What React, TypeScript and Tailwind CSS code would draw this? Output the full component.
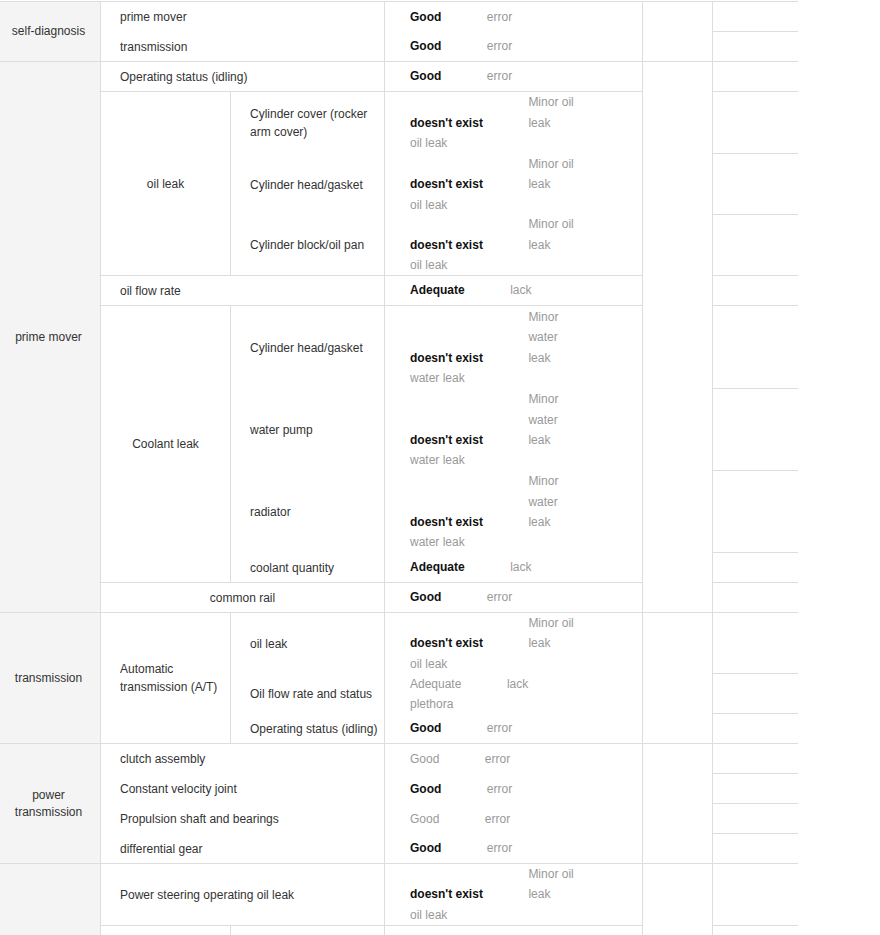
import React from 'react';

// column 1: group heading (gray)
const GROUP =
    'flex items-center justify-center border-r border-b border-[#ddd] bg-[#f4f4f4] pr-[3px] text-center leading-[17px] text-[#333]';
// item label cells (col 2 / col 3)
const LABEL = 'flex items-center border-r border-[#ddd] pl-[19px] leading-[18px] text-[#333]';
// centered label spanning sub rows
const CENTER = 'flex items-center justify-center border-r border-[#ddd] text-center leading-[18px] text-[#333]';
// result cell
const VALUE = 'flex flex-col justify-center border-r border-[#ddd] pl-[25px] leading-[20.4px]';
const NOTE = 'border-r border-b border-[#ddd]';

const EXTRA_ROWS = [
    'row-start-1', 'row-start-2', 'row-start-3', 'row-start-4', 'row-start-5', 'row-start-6', 'row-start-7',
    'row-start-8', 'row-start-9', 'row-start-10', 'row-start-11', 'row-start-12', 'row-start-13', 'row-start-14',
    'row-start-15', 'row-start-16', 'row-start-17', 'row-start-18', 'row-start-19', 'row-start-20', 'row-start-21',
];

const Choice = ({ on = false, last = false, children }: { on?: boolean; last?: boolean; children: React.ReactNode }) => (
    <span className={`${on ? 'font-bold text-[#111]' : 'text-[#999]'} ${last ? '' : 'mr-[45.5px]'}`}>{children}</span>
);

const GoodError = ({ on = true }: { on?: boolean }) => (
    <div>
        <Choice on={on}>Good</Choice>
        <Choice last>error</Choice>
    </div>
);

const AdequateLack = () => (
    <div>
        <Choice on>Adequate</Choice>
        <Choice last>lack</Choice>
    </div>
);

const Leak = ({ kind }: { kind: string }) => (
    <>
        <div className="flex items-end">
            <Choice on>doesn't exist</Choice>
            <span className="w-[50px] text-[#999]">Minor {kind} leak</span>
        </div>
        <div className="text-[#999]">{kind} leak</div>
    </>
);

export default function App() {
    return (
        <div className="min-h-screen bg-white font-['Liberation_Sans',Arial,sans-serif] text-[12px]">
            <div className="mt-px grid w-[798px] grid-cols-[101px_130px_154px_258px_70px_85px] grid-rows-[30px_30px_30px_62px_61px_61px_30px_83px_82px_82px_30px_30px_61px_40px_30px_30px_30px_30px_30px_62px_40px] border-t border-[#ddd]">
                {/* self-diagnosis */}
                <div className={`${GROUP} col-start-1 row-start-1 row-span-2`}>self-diagnosis</div>
                <div className={`${LABEL} col-start-2 col-span-2 row-start-1`}>prime mover</div>
                <div className={`${VALUE} col-start-4 row-start-1`}><GoodError /></div>
                <div className={`${LABEL} border-b col-start-2 col-span-2 row-start-2`}>transmission</div>
                <div className={`${VALUE} border-b col-start-4 row-start-2`}><GoodError /></div>
                <div className={`${NOTE} col-start-5 row-start-1 row-span-2`} />

                {/* prime mover */}
                <div className={`${GROUP} col-start-1 row-start-3 row-span-10`}>prime mover</div>
                <div className={`${LABEL} border-b col-start-2 col-span-2 row-start-3`}>Operating status (idling)</div>
                <div className={`${VALUE} border-b col-start-4 row-start-3`}><GoodError /></div>

                <div className={`${CENTER} border-b col-start-2 row-start-4 row-span-3`}>oil leak</div>
                <div className={`${LABEL} col-start-3 row-start-4`}>Cylinder cover (rocker arm cover)</div>
                <div className={`${VALUE} col-start-4 row-start-4`}><Leak kind="oil" /></div>
                <div className={`${LABEL} col-start-3 row-start-5`}>Cylinder head/gasket</div>
                <div className={`${VALUE} col-start-4 row-start-5`}><Leak kind="oil" /></div>
                <div className={`${LABEL} border-b col-start-3 row-start-6`}>Cylinder block/oil pan</div>
                <div className={`${VALUE} border-b col-start-4 row-start-6`}><Leak kind="oil" /></div>

                <div className={`${LABEL} border-b col-start-2 col-span-2 row-start-7`}>oil flow rate</div>
                <div className={`${VALUE} border-b col-start-4 row-start-7`}><AdequateLack /></div>

                <div className={`${CENTER} border-b col-start-2 row-start-8 row-span-4`}>Coolant leak</div>
                <div className={`${LABEL} col-start-3 row-start-8`}>Cylinder head/gasket</div>
                <div className={`${VALUE} col-start-4 row-start-8`}><Leak kind="water" /></div>
                <div className={`${LABEL} col-start-3 row-start-9`}>water pump</div>
                <div className={`${VALUE} col-start-4 row-start-9`}><Leak kind="water" /></div>
                <div className={`${LABEL} col-start-3 row-start-10`}>radiator</div>
                <div className={`${VALUE} col-start-4 row-start-10`}><Leak kind="water" /></div>
                <div className={`${LABEL} border-b col-start-3 row-start-11`}>coolant quantity</div>
                <div className={`${VALUE} border-b col-start-4 row-start-11`}><AdequateLack /></div>

                <div className={`${CENTER} border-b col-start-2 col-span-2 row-start-12`}>common rail</div>
                <div className={`${VALUE} border-b col-start-4 row-start-12`}><GoodError /></div>
                <div className={`${NOTE} col-start-5 row-start-3 row-span-10`} />

                {/* transmission */}
                <div className={`${GROUP} col-start-1 row-start-13 row-span-3`}>transmission</div>
                <div className={`${LABEL} border-b col-start-2 row-start-13 row-span-3`}>Automatic transmission (A/T)</div>
                <div className={`${LABEL} col-start-3 row-start-13`}>oil leak</div>
                <div className={`${VALUE} col-start-4 row-start-13`}><Leak kind="oil" /></div>
                <div className={`${LABEL} col-start-3 row-start-14`}>Oil flow rate and status</div>
                <div className={`${VALUE} col-start-4 row-start-14`}>
                    <div>
                        <Choice>Adequate</Choice>
                        <Choice last>lack</Choice>
                    </div>
                    <div className="text-[#999]">plethora</div>
                </div>
                <div className={`${LABEL} border-b col-start-3 row-start-15`}>Operating status (idling)</div>
                <div className={`${VALUE} border-b col-start-4 row-start-15`}><GoodError /></div>
                <div className={`${NOTE} col-start-5 row-start-13 row-span-3`} />

                {/* power transmission */}
                <div className={`${GROUP} col-start-1 row-start-16 row-span-4`}>power transmission</div>
                <div className={`${LABEL} col-start-2 col-span-2 row-start-16`}>clutch assembly</div>
                <div className={`${VALUE} col-start-4 row-start-16`}><GoodError on={false} /></div>
                <div className={`${LABEL} col-start-2 col-span-2 row-start-17`}>Constant velocity joint</div>
                <div className={`${VALUE} col-start-4 row-start-17`}><GoodError /></div>
                <div className={`${LABEL} col-start-2 col-span-2 row-start-18`}>Propulsion shaft and bearings</div>
                <div className={`${VALUE} col-start-4 row-start-18`}><GoodError on={false} /></div>
                <div className={`${LABEL} border-b col-start-2 col-span-2 row-start-19`}>differential gear</div>
                <div className={`${VALUE} border-b col-start-4 row-start-19`}><GoodError /></div>
                <div className={`${NOTE} col-start-5 row-start-16 row-span-4`} />

                {/* steering */}
                <div className={`${GROUP} col-start-1 row-start-20 row-span-2`} />
                <div className={`${LABEL} border-b col-start-2 col-span-2 row-start-20`}>Power steering operating oil leak</div>
                <div className={`${VALUE} border-b col-start-4 row-start-20`}><Leak kind="oil" /></div>
                <div className={`${LABEL} col-start-2 row-start-21`} />
                <div className={`${LABEL} col-start-3 row-start-21`} />
                <div className={`${VALUE} col-start-4 row-start-21`} />
                <div className={`${NOTE} col-start-5 row-start-20 row-span-2`} />

                {/* remarks column */}
                {EXTRA_ROWS.map((row) => (
                    <div key={row} className={`col-start-6 border-b border-[#ddd] ${row}`} />
                ))}
            </div>
        </div>
    );
}
